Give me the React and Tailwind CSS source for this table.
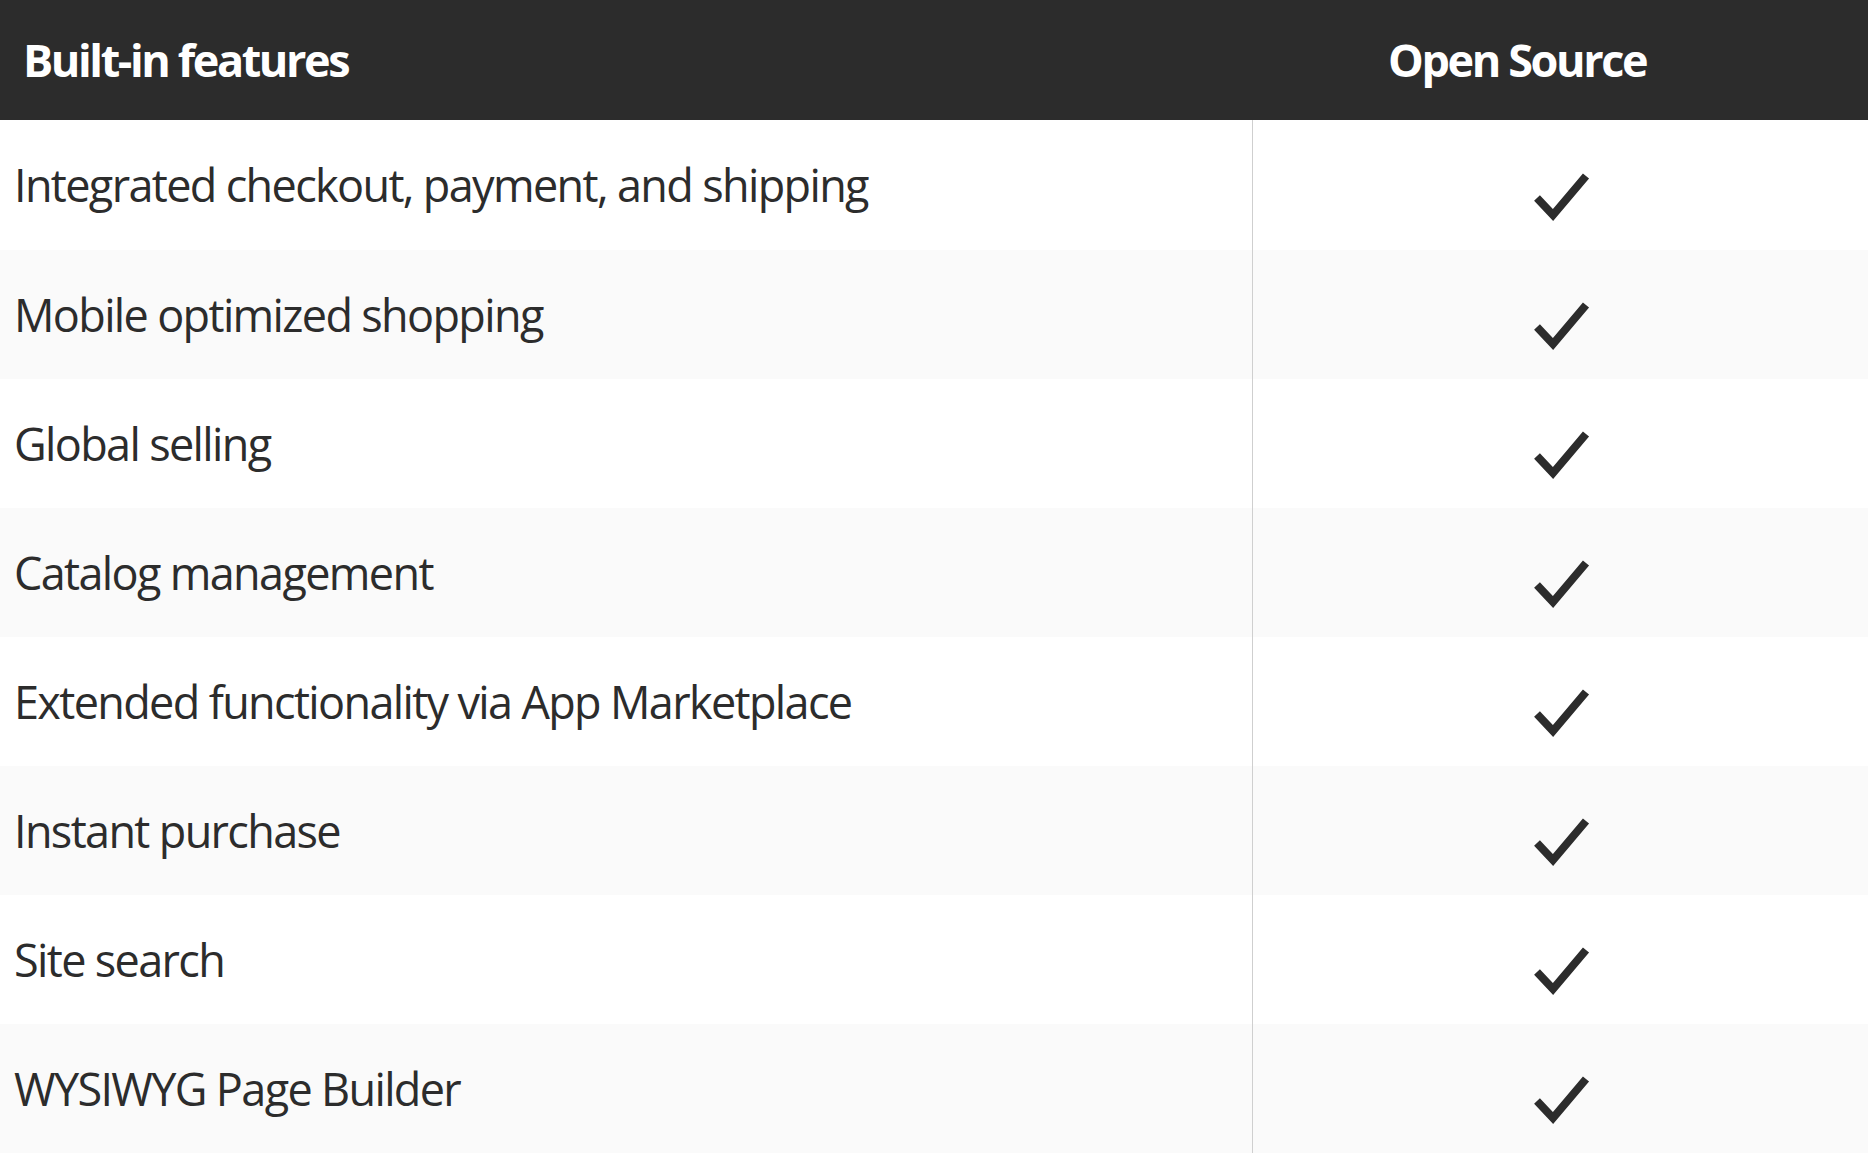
import React from 'react'

const features = [
  'Integrated checkout, payment, and shipping',
  'Mobile optimized shopping',
  'Global selling',
  'Catalog management',
  'Extended functionality via App Marketplace',
  'Instant purchase',
  'Site search',
  'WYSIWYG Page Builder',
]

const Check = () => (
  <svg width="58" height="52" viewBox="0 0 58 52" fill="none" className="block">
    <path d="M5 27 L21 44 L54 5" stroke="#2c2c2c" strokeWidth="8" strokeLinecap="butt" strokeLinejoin="miter" />
  </svg>
)

const App = () => {
  return (
    <div className="w-[1868px] h-[1156px] bg-white text-[#2c2c2c] font-['Open_Sans',sans-serif] text-[45px] overflow-hidden">
      <div className="grid grid-cols-[1253px_1fr] h-[120px] bg-[#2c2c2c] text-white font-bold tracking-[-2.4px]">
        <div className="flex items-center pl-[23px]">Built-in features</div>
        <div className="flex items-center pl-[135px]">Open Source</div>
      </div>
      {features.map((f, i) => (
        <div
          key={f}
          className={`grid grid-cols-[1253px_1fr] ${i === 0 ? 'h-[130px]' : 'h-[129px]'} ${i % 2 === 1 ? 'bg-[#fafafa]' : 'bg-white'}`}
        >
          <div className="flex items-center pl-[14px] border-r border-[#cfcfcf] tracking-[-1.65px]">{f}</div>
          <div className={`pl-[279px] ${i === 0 ? 'pt-[51px]' : 'pt-[50px]'}`}>
            <Check />
          </div>
        </div>
      ))}
    </div>
  )
}

export default App
